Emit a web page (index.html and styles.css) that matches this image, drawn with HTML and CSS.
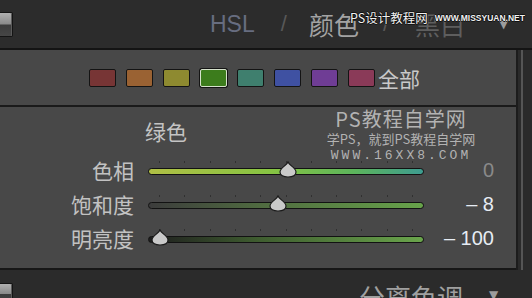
FILE: index.html
```html
<!DOCTYPE html>
<html lang="zh-CN">

<head>
    <meta charset="UTF-8">
    <meta name="viewport" content="width=device-width, initial-scale=1.0">
    <title>HSL / 颜色 / 黑白</title>
    <link rel="stylesheet" href="styles.css">
</head>

<body>
    <div class="screen">
        <div class="header">
            <div class="toggle"></div>
            <span class="tab tab-hsl">HSL</span>
            <span class="slash slash-1">/</span>
            <span class="tab tab-color">颜色</span>
            <span class="slash slash-2">/</span>
            <span class="tab tab-bw">黑白</span>
            <span class="arrow">▼</span>
        </div>

        <div class="main">
            <div class="panel">
                <div class="swatches">
                    <span class="swatch red"></span>
                    <span class="swatch orange"></span>
                    <span class="swatch yellow"></span>
                    <span class="swatch green selected"></span>
                    <span class="swatch aqua"></span>
                    <span class="swatch blue"></span>
                    <span class="swatch purple"></span>
                    <span class="swatch magenta"></span>
                    <span class="all">全部</span>
                </div>

                <div class="content">
                    <div class="title">绿色</div>

                    <div class="row">
                        <span class="label">色相</span>
                        <div class="slider">
                            <div class="ticks"></div>
                            <div class="track hue"></div>
                            <svg class="thumb" style="left: 131px" width="18" height="17" viewBox="0 0 18 17">
                                <path d="M9 1 C10.5 4.5 17 7 17 11 C17 14.5 13.5 16 9 16 C4.5 16 1 14.5 1 11 C1 7 7.5 4.5 9 1 Z" />
                            </svg>
                        </div>
                        <span class="value zero">0</span>
                    </div>

                    <div class="row">
                        <span class="label">饱和度</span>
                        <div class="slider">
                            <div class="ticks"></div>
                            <div class="track sat"></div>
                            <svg class="thumb" style="left: 121px" width="18" height="17" viewBox="0 0 18 17">
                                <path d="M9 1 C10.5 4.5 17 7 17 11 C17 14.5 13.5 16 9 16 C4.5 16 1 14.5 1 11 C1 7 7.5 4.5 9 1 Z" />
                            </svg>
                        </div>
                        <span class="value"><i>–</i> 8</span>
                    </div>

                    <div class="row">
                        <span class="label">明亮度</span>
                        <div class="slider">
                            <div class="ticks"></div>
                            <div class="track lum"></div>
                            <svg class="thumb" style="left: 3px" width="18" height="17" viewBox="0 0 18 17">
                                <path d="M9 1 C10.5 4.5 17 7 17 11 C17 14.5 13.5 16 9 16 C4.5 16 1 14.5 1 11 C1 7 7.5 4.5 9 1 Z" />
                            </svg>
                        </div>
                        <span class="value"><i>–</i> 100</span>
                    </div>
                </div>

                <div class="mark">
                    <div class="mark-big">PS教程自学网</div>
                    <div class="mark-small">学PS，就到PS教程自学网</div>
                    <div class="mark-url">WWW.16XX8.COM</div>
                </div>
            </div>
            <div class="scroll"></div>
        </div>

        <div class="footer">
            <div class="toggle small"></div>
            <span class="footer-title">分离色调</span>
            <span class="arrow footer-arrow">▼</span>
        </div>

        <div class="site-mark">
            <span class="site-name">PS设计教程网</span>
            <span class="site-url">WWW.MISSYUAN.NET</span>
        </div>
    </div>
</body>

</html>
```

FILE: styles.css
```css
body {
    margin: 0;
    background-color: #2b2b2b;
    font-family: "Noto Sans CJK SC", "Liberation Sans", sans-serif;
}

.screen {
    position: relative;
    width: 532px;
    height: 298px;
    overflow: hidden;
    background: #2b2b2b;
}

/* header tabs */

.header {
    display: flex;
    align-items: center;
    height: 48px;
    background: #2c2c2c;
    white-space: nowrap;
}

.toggle {
    flex: none;
    width: 12px;
    height: 23px;
    border: 1px solid #141414;
    border-left: none;
    border-radius: 0 2px 2px 0;
    background: linear-gradient(#b0b0b0, #8a8a8a 48%, #3c3c3c 52%, #464646);
    box-shadow: inset -1px 0 0 #5a5a5a;
}

.tab {
    line-height: 30px;
}

.tab-hsl {
    margin-left: 197px;
    font-family: "Liberation Sans", sans-serif;
    font-size: 23px;
    color: #676d80;
}

.slash {
    font-family: "Liberation Sans", sans-serif;
    font-size: 22px;
    color: #585858;
}

.slash-1 {
    margin-left: 26px;
}

.slash-2 {
    margin-left: 24px;
}

.tab-color {
    margin-left: 22px;
    font-size: 25px;
    color: #a3a3a3;
}

.tab-bw {
    margin-left: 26px;
    font-size: 25px;
    color: #5e5e5e;
}

.arrow {
    margin-left: 34px;
    font-size: 12px;
    color: #9c9c9c;
    font-family: "DejaVu Sans", sans-serif;
}

/* panel */

.main {
    display: flex;
    height: 220px;
    border-top: 2px solid #141414;
}

.panel {
    position: relative;
    width: 518px;
    height: 218px;
    background: #484848;
    border-bottom: 2px solid #171717;
}

.scroll {
    width: 14px;
    background: #2a2a2a;
    border-left: 2px solid #1c1c1c;
    box-shadow: inset -9px 0 0 #2a2a2a, inset -11px 0 0 #555;
}

.swatches {
    display: flex;
    align-items: center;
    gap: 10px;
    height: 55px;
    padding-left: 89px;
    border-bottom: 2px solid #1a1a1a;
}

.swatch {
    width: 25px;
    height: 16px;
    border: 1.5px solid #141414;
    border-radius: 2px;
}

.swatch.selected {
    border-color: #d6e2cc;
    box-shadow: 0 0 0 1px #141414;
}

.red { background: #773535; }
.orange { background: #9a6233; }
.yellow { background: #8e8a30; }
.green { background: #3c7c1c; }
.aqua { background: #3f7f6e; }
.blue { background: #3f51a2; }
.purple { background: #6f3d95; }
.magenta { background: #8a3a58; }

.all {
    margin-left: -7px;
    font-size: 21px;
    color: #c9c9c9;
    line-height: 28px;
}

/* sliders */

.content {
    padding-top: 10px;
}

.title {
    padding-left: 145px;
    height: 36px;
    font-size: 21px;
    line-height: 28px;
    color: #c4c4c4;
}

.row {
    display: grid;
    grid-template-columns: 134px 276px 56px;
    column-gap: 14px;
    align-items: center;
    height: 34px;
}

.label {
    text-align: right;
    font-size: 21px;
    color: #c2c2c2;
    line-height: 28px;
}

.slider {
    position: relative;
    height: 22px;
}

.ticks {
    position: absolute;
    left: 11px;
    top: 2px;
    width: 256px;
    height: 2px;
    background: repeating-linear-gradient(to right, #2a2a2a 0 1px, transparent 1px 25.3px);
    opacity: 0.8;
}

.track {
    position: absolute;
    left: 0;
    right: 0;
    top: 9px;
    height: 5px;
    border: 1px solid #121212;
    border-radius: 4px;
}

.hue {
    background: linear-gradient(to right, #b0bf45, #86c443 45%, #5cb45c 75%, #3e9c90);
}

.sat {
    background: linear-gradient(to right, #3c3c3c, #4f6a40 40%, #67a34a);
}

.lum {
    background: linear-gradient(to right, #1e1e1e, #3f5d30 40%, #6aa54c);
}

.thumb {
    position: absolute;
    top: 2px;
}

.thumb path {
    fill: #c9c9c9;
    stroke: #1a1a1a;
    stroke-width: 1.2;
}

.value {
    font-family: "Liberation Sans", sans-serif;
    font-size: 20px;
    text-align: right;
    white-space: nowrap;
    color: #e6ecf4;
}

.value i {
    font-style: normal;
}

.value.zero {
    color: #8a8a8a;
}

/* watermarks over the panel */

.mark {
    position: absolute;
    left: 322px;
    top: 58px;
    width: 158px;
    text-align: center;
    color: rgba(215, 215, 215, 0.75);
}

.mark-big {
    font-size: 20px;
    line-height: 22px;
    letter-spacing: 1px;
}

.mark-small {
    font-size: 13px;
    line-height: 17px;
}

.mark-url {
    margin-top: 2px;
    font-family: "Liberation Mono", monospace;
    font-size: 13px;
    letter-spacing: 3px;
    line-height: 14px;
}

.site-mark {
    position: absolute;
    left: 350px;
    top: 10px;
    display: flex;
    align-items: center;
    gap: 7px;
    white-space: nowrap;
    color: #f0f0f0;
    text-shadow: -1px 0 #111, 1px 0 #111, 0 -1px #111, 0 1px #111;
}

.site-name {
    font-size: 12.5px;
    line-height: 16px;
}

.site-url {
    font-family: "Liberation Sans", sans-serif;
    font-size: 8.5px;
    font-weight: bold;
}

/* footer */

.footer {
    display: flex;
    align-items: flex-start;
    height: 28px;
    background: #2b2b2b;
    white-space: nowrap;
}

.toggle.small {
    margin-top: 13px;
    height: 20px;
}

.footer-title {
    margin-left: 346px;
    margin-top: 9px;
    font-size: 26px;
    line-height: 36px;
    color: #a0a0a0;
}

.footer-arrow {
    margin-left: 26px;
    margin-top: 18px;
}
```
